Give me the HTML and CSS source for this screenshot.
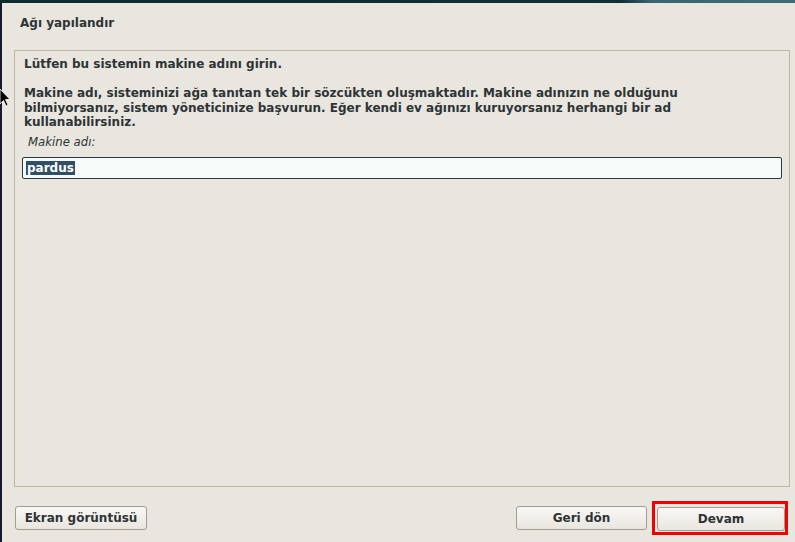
FILE: index.html
```html
<!DOCTYPE html>
<html lang="tr">
<head>
<meta charset="utf-8">
<title>Ağı yapılandır</title>
<link rel="stylesheet" href="styles.css">
</head>
<body>
<div class="desk-top"></div>
<div class="window">
  <div class="title">Ağı yapılandır</div>
  <div class="frame">
    <p class="question">Lütfen bu sistemin makine adını girin.</p>
    <p class="desc">Makine adı, sisteminizi ağa tanıtan tek bir sözcükten oluşmaktadır. Makine adınızın ne olduğunu<br>bilmiyorsanız, sistem yöneticinize başvurun. Eğer kendi ev ağınızı kuruyorsanız herhangi bir ad<br>kullanabilirsiniz.</p>
    <div class="label">Makine adı:</div>
    <div class="entry"><span class="sel">pardus</span></div>
  </div>
  <div class="buttons">
    <button class="btn btn-shot">Ekran görüntüsü</button>
    <div class="spacer"></div>
    <button class="btn btn-back">Geri dön</button>
    <div class="focus-ring"><button class="btn btn-next">Devam</button></div>
  </div>
  <svg class="cursor" width="12" height="18" viewBox="0 0 12 18"><path d="M0 0 L0 15 L3.5 11.5 L6 17 L8 16 L5.5 10.5 L10 10.5 Z" fill="#000" stroke="#fff" stroke-width="0.8"/></svg>
</div>
</body>
</html>
```
FILE: styles.css
```css
html, body {
  margin: 0;
  padding: 0;
  width: 795px;
  height: 542px;
  overflow: hidden;
  background: #e8e6df;
  font-family: "DejaVu Sans", sans-serif;
  color: #2e3436;
}
.desk-top {
  height: 3px;
  background: linear-gradient(90deg, #0d2b30 0%, #0f3035 78%, #3b6570 82%, #3e6a74 100%);
}
.window {
  position: relative;
  box-sizing: border-box;
  height: 539px;
  border-left: 2px solid #141b30;
  padding: 0 5px 0 12px;
  display: flex;
  flex-direction: column;
}
.title {
  padding: 12px 0 0 6px;
  height: 17px;
  line-height: 17px;
  font-size: 12px;
  font-weight: bold;
  color: #2e3436;
}
.frame {
  margin-top: 18px;
  height: 437px;
  box-sizing: border-box;
  border: 1px solid #bdb5a6;
  padding: 6px 6px 0 9px;
}
.question, .desc {
  margin: 0;
  font-size: 12px;
  font-weight: bold;
  line-height: 14.5px;
  color: #2e3436;
}
.question { margin-bottom: 14.5px; }
.label {
  margin: 5px 0 0 4px;
  font-size: 11.7px;
  font-style: italic;
  line-height: 14px;
  color: #2e3436;
}
.entry {
  margin: 8px 1px 0 -2px;
  height: 22px;
  box-sizing: border-box;
  border: 1px solid #2b3a42;
  border-radius: 2px;
  background: #f6faf8;
  padding: 2px 0 0 3px;
  font-size: 12px;
  font-weight: bold;
  line-height: 16px;
}
.sel {
  background: #304e66;
  color: #ffffff;
  padding: 0 1px;
}
.buttons {
  display: flex;
  align-items: center;
  margin-top: 14px;
  padding-left: 1px;
}
.spacer { flex: 1; }
.btn {
  height: 24px;
  box-sizing: border-box;
  border: 1px solid #a29c90;
  border-radius: 3px;
  background: linear-gradient(#f9f8f5, #e9e6df);
  font-family: "DejaVu Sans", sans-serif;
  font-size: 12px;
  font-weight: bold;
  color: #2e3436;
  padding: 0;
}
.btn-shot { width: 132px; }
.btn-back { width: 131px; margin-right: 5px; }
.focus-ring {
  border: 3px solid #f00000;
  padding: 3px 0 0 2px;
  height: 34px;
  box-sizing: border-box;
  margin-right: 2px;
}
.btn-next { width: 128px; display: block; }
.cursor {
  position: absolute;
  left: -2px;
  top: 86px;
}
```
